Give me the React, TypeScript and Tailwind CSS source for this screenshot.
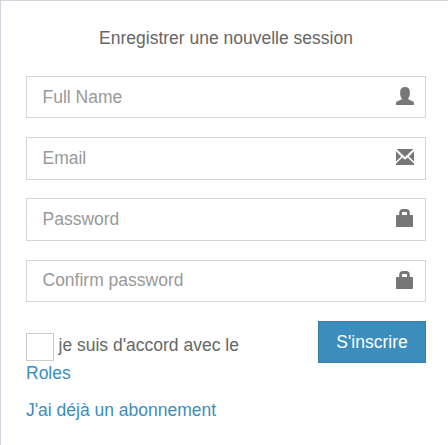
import type { ReactNode } from 'react';

const UserIcon = () => (
  <svg className="h-[18px] w-[18px]" viewBox="0 0 18 18" fill="currentColor" aria-hidden="true">
    <path d="M9 0C12 0 13.8 1.7 13.8 4.2V7.2C13.8 9 13.2 10 12.4 11V12C12.4 12.4 12.6 12.6 13.1 12.8L16.7 14.3C17.6 14.7 18 15.4 18 16.4V18H0V16.4C0 15.4 .4 14.7 1.3 14.3L4.9 12.8C5.4 12.6 5.6 12.4 5.6 12V11C4.8 10 4.2 9 4.2 7.2V4.2C4.2 1.7 6 0 9 0Z" />
  </svg>
);

const MailIcon = () => (
  <svg className="h-[18px] w-[18px]" viewBox="0 0 18 18" fill="currentColor" aria-hidden="true">
    <path d="M.6 1H17.4L9 8.9ZM0 3.2L5.2 8.4L0 13.4ZM18 3.2V13.4L12.8 8.4ZM6.4 9.5L9 11.8L11.6 9.5L18 15.4V17H0V15.4Z" />
  </svg>
);

const LockIcon = () => (
  <svg className="h-[18px] w-[18px]" viewBox="0 0 18 18" fill="currentColor" aria-hidden="true">
    <path fillRule="evenodd" d="M3.2 6V3.5C3.2 1.4 4.7 0 6.7 0H10.3C12.3 0 13.8 1.4 13.8 3.5V6H16C16.7 6 17 6.3 17 7V17C17 17.7 16.7 18 16 18H1C.3 18 0 17.7 0 17V7C0 6.3 .3 6 1 6ZM6 6H11V4C11 3.3 10.7 3 10 3H7C6.3 3 6 3.3 6 4Z" />
  </svg>
);

interface FieldProps {
  type: string;
  label: string;
  icon: ReactNode;
}

function Field({ type, label, icon }: FieldProps) {
  return (
    <div className="mb-[18.75px] flex h-[42.5px] items-center border border-[#d2d6de] bg-white pr-[11px] pl-[15.5px]">
      <input
        type={type}
        placeholder={label}
        aria-label={label}
        className="h-full min-w-0 flex-1 bg-transparent outline-none placeholder:text-[#999]"
      />
      <span className="mb-[2.5px] shrink-0 text-[#777]">{icon}</span>
    </div>
  );
}

export default function App() {
  return (
    <main className="h-[445px] w-[448px] overflow-hidden border-t border-l border-[#d2d6de] bg-white pt-[25px] pr-[22px] pl-[25px] font-['Liberation_Sans',Arial,sans-serif] text-[17.5px] leading-[25px] text-[#666]">
      <p className="mb-[24.9px] text-center">Enregistrer une nouvelle session</p>
      <form>
        <Field type="text" label="Full Name" icon={<UserIcon />} />
        <Field type="email" label="Email" icon={<MailIcon />} />
        <Field type="password" label="Password" icon={<LockIcon />} />
        <Field type="password" label="Confirm password" icon={<LockIcon />} />
        <div className="flex items-start justify-between">
          <div className="pt-3">
            <label className="flex h-7 items-start gap-[4.5px]">
              <input type="checkbox" className="h-7 w-7 shrink-0 appearance-none border border-[#d0cbc4] bg-white" />
              <span>je suis d'accord avec le</span>
            </label>
            <a href="#roles" className="block text-[#3c8dbc]">Roles</a>
          </div>
          <button type="button" className="h-[42px] w-[108px] border border-[#367fa9] bg-[#3c8dbc] pt-px text-white">
            S'inscrire
          </button>
        </div>
      </form>
      <a href="#login" className="mt-3 block text-[#3c8dbc]">J'ai déjà un abonnement</a>
    </main>
  );
}
